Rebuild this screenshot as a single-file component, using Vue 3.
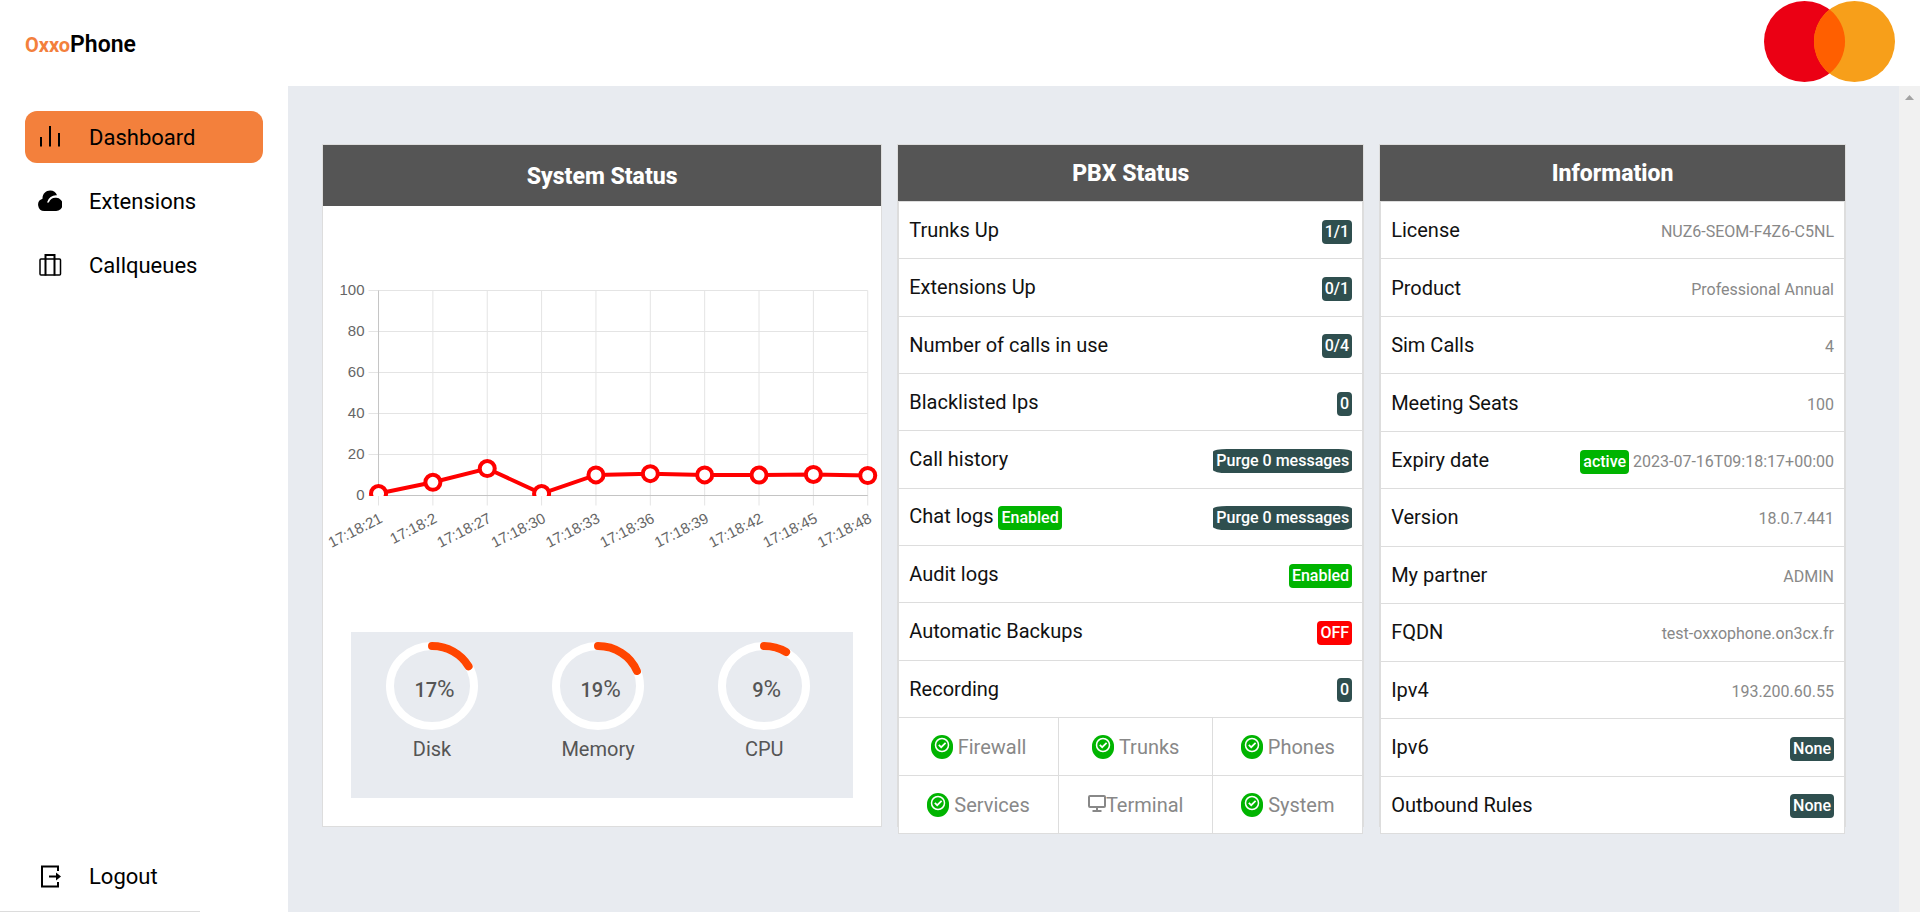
<script setup>
const nav = [
  { label: 'Dashboard', icon: 'bars', active: true },
  { label: 'Extensions', icon: 'cloud' },
  { label: 'Callqueues', icon: 'case' },
]

const samples = [
  { time: '17:18:21', value: 1 },
  { time: '17:18:2', value: 6.5 },
  { time: '17:18:27', value: 13.2 },
  { time: '17:18:30', value: 1 },
  { time: '17:18:33', value: 10.1 },
  { time: '17:18:36', value: 10.7 },
  { time: '17:18:39', value: 10.1 },
  { time: '17:18:42', value: 10 },
  { time: '17:18:45', value: 10.3 },
  { time: '17:18:48', value: 9.8 },
]
const left = 55.5
const right = 544.5
const top = 18.5
const bottom = 223.5
const xAt = (i) => left + ((right - left) * i) / (samples.length - 1)
const yAt = (v) => bottom - ((bottom - top) * v) / 100
const grid = [0, 20, 40, 60, 80, 100]
const line = samples.map((s, i) => `${xAt(i)},${yAt(s.value)}`).join(' ')

const gauges = [
  { label: 'Disk', value: 17 },
  { label: 'Memory', value: 19 },
  { label: 'CPU', value: 9 },
]

const pbx = [
  { label: 'Trunks Up', badge: '1/1', tone: 'slate' },
  { label: 'Extensions Up', badge: '0/1', tone: 'slate' },
  { label: 'Number of calls in use', badge: '0/4', tone: 'slate' },
  { label: 'Blacklisted Ips', badge: '0', tone: 'slate' },
  { label: 'Call history', action: 'Purge 0 messages' },
  { label: 'Chat logs', note: 'Enabled', action: 'Purge 0 messages' },
  { label: 'Audit logs', badge: 'Enabled', tone: 'green' },
  { label: 'Automatic Backups', badge: 'OFF', tone: 'red' },
  { label: 'Recording', badge: '0', tone: 'slate' },
]

const services = ['Firewall', 'Trunks', 'Phones', 'Services', 'Terminal', 'System']

const info = [
  { label: 'License', value: 'NUZ6-SEOM-F4Z6-C5NL' },
  { label: 'Product', value: 'Professional Annual' },
  { label: 'Sim Calls', value: '4' },
  { label: 'Meeting Seats', value: '100' },
  { label: 'Expiry date', value: '2023-07-16T09:18:17+00:00', badge: 'active', tone: 'green' },
  { label: 'Version', value: '18.0.7.441' },
  { label: 'My partner', value: 'ADMIN' },
  { label: 'FQDN', value: 'test-oxxophone.on3cx.fr' },
  { label: 'Ipv4', value: '193.200.60.55' },
  { label: 'Ipv6', badge: 'None', tone: 'slate' },
  { label: 'Outbound Rules', badge: 'None', tone: 'slate' },
]
</script>

<template>
  <div class="app">
    <header class="topbar">
      <a href="#" class="brand"><span class="brand-accent">Oxxo</span>Phone</a>
      <svg class="avatar" width="131" height="81" viewBox="0 0 131 81" role="img" aria-label="Profile">
        <circle cx="40.5" cy="40.5" r="40.5" fill="#eb0014" />
        <circle cx="90.5" cy="40.5" r="40.5" fill="#f79f1a" />
        <path d="M65.5 8.600A40.500 40.500 0 0 1 65.500 72.400A40.500 40.500 0 0 1 65.500 8.600Z" fill="#ff5f00" />
      </svg>
    </header>

    <div class="body">
      <aside class="sidebar">
        <nav class="menu">
          <a v-for="item in nav" :key="item.label" href="#" class="item" :class="{ active: item.active }">
            <svg v-if="item.icon === 'bars'" class="icon" viewBox="0 0 24 24" fill="none" stroke="#000">
              <path d="M3 12v9.500" stroke-width="2" />
              <path d="M12 1v20.500" stroke-width="2" />
              <path d="M21 8v13.500" stroke-width="2" />
            </svg>
            <svg v-else-if="item.icon === 'cloud'" class="icon" viewBox="0 0 24 24">
              <path fill="#000" d="M6.500 22A6.300 6.300 0 0 1 4.500 9.700C4.500 4.500 8 1.500 12.200 1.500C15.500 1.500 18 3.300 19 6.200A9.200 9.200 0 0 0 9 13.500L10.800 13.500A7.300 7.300 0 0 1 18.300 8.800A6.600 6.600 0 0 1 17.800 22Z" />
            </svg>
            <svg v-else class="icon" viewBox="0 0 24 24" fill="none" stroke="#000">
              <rect x="2" y="6" width="20.500" height="16" rx="1" stroke-width="1.500" />
              <path d="M7.500 22.500V2H16.500V22.500" stroke-width="2" />
            </svg>
            <span>{{ item.label }}</span>
          </a>
        </nav>
        <a href="#" class="item logout">
          <svg class="icon" viewBox="0 0 24 24" fill="none" stroke="#000" stroke-width="2">
            <path d="M20 7V2.500H4V22.500H20V18" />
            <path d="M11 12.500H19" />
            <path d="M18 8.500L23 12.500L18 16.500Z" fill="#000" stroke="none" />
          </svg>
          <span>Logout</span>
        </a>
      </aside>

      <main class="content">
        <div class="cards">
          <section class="card">
            <h2 class="title system-title">System Status</h2>
            <svg class="chart" viewBox="0 0 558 288" role="img" aria-label="System usage over time">
              <defs>
                <clipPath id="plot"><rect x="40" y="0" width="518" height="224" /></clipPath>
              </defs>
              <g class="grid-lines">
                <line v-for="(s, i) in samples" :key="'x' + s.time" :x1="xAt(i)" :x2="xAt(i)" :y1="top" :y2="bottom + 10" />
                <line v-for="g in grid" :key="'y' + g" :x1="left - 10" :x2="right" :y1="yAt(g)" :y2="yAt(g)" />
                <path :d="`M${left} ${top}V${bottom}H${right}`" class="axis" />
              </g>
              <g class="ticks">
                <text v-for="g in grid" :key="g" :x="left - 14" :y="yAt(g) + 4" text-anchor="end">{{ g }}</text>
                <text
                  v-for="(s, i) in samples"
                  :key="s.time"
                  :transform="`translate(${xAt(i) + 5} ${bottom + 26}) rotate(-27)`"
                  text-anchor="end"
                >{{ s.time }}</text>
              </g>
              <g clip-path="url(#plot)" class="series">
                <polyline :points="line" fill="none" />
                <circle v-for="(s, i) in samples" :key="s.time" :cx="xAt(i)" :cy="yAt(s.value)" r="7.5" />
              </g>
            </svg>
            <div class="gauges">
              <div v-for="g in gauges" :key="g.label" class="gauge">
                <div class="dial">
                  <svg width="92" height="88" viewBox="0 0 92 88" fill="none" stroke-width="8">
                    <ellipse cx="46" cy="44" rx="42" ry="40" stroke="#fff" />
                    <path
                      d="M46 4A42 40 0 0 1 46 84A42 40 0 0 1 46 4"
                      stroke="#ff4500"
                      stroke-linecap="round"
                      pathLength="100"
                      :stroke-dasharray="`${g.value} 100`"
                    />
                  </svg>
                  <div class="reading">{{ g.value }}<span class="percent">%</span></div>
                </div>
                <div class="gauge-label">{{ g.label }}</div>
              </div>
            </div>
          </section>

          <section class="card">
            <div class="sheet">
              <table class="rows pbx">
                <thead>
                  <tr><th colspan="2" class="title">PBX Status</th></tr>
                </thead>
                <tbody>
                  <tr v-for="r in pbx" :key="r.label">
                    <th scope="row">{{ r.label }} <span v-if="r.note" class="badge green">{{ r.note }}</span></th>
                    <td>
                      <button v-if="r.action" type="button" class="badge slate">{{ r.action }}</button>
                      <span v-else class="badge" :class="r.tone">{{ r.badge }}</span>
                    </td>
                  </tr>
                </tbody>
              </table>
              <ul class="services">
                <li v-for="s in services" :key="s">
                  <svg v-if="s === 'Terminal'" class="desktop" width="18" height="18" viewBox="0 0 18 18" fill="none" stroke="#888" stroke-width="2">
                    <rect x="1" y="2" width="16" height="11" rx="1" />
                    <path d="M9 13V16.500M4.500 17H13.500" />
                  </svg>
                  <span v-else class="check">
                    <svg width="16" height="16" viewBox="0 0 16 16" fill="none" stroke="#fff">
                      <circle cx="8" cy="8" r="6.500" stroke-width="1.500" />
                      <path d="M4.800 7.800L7.200 10.200L11.600 5.800" stroke-width="1.700" />
                    </svg>
                  </span>
                  <span>{{ s }}</span>
                </li>
              </ul>
            </div>
          </section>

          <section class="card">
            <div class="sheet">
              <table class="rows info">
                <thead>
                  <tr><th colspan="2" class="title">Information</th></tr>
                </thead>
                <tbody>
                  <tr v-for="r in info" :key="r.label">
                    <th scope="row">{{ r.label }}</th>
                    <td><span v-if="r.badge" class="badge" :class="r.tone">{{ r.badge }}</span> {{ r.value }}</td>
                  </tr>
                </tbody>
              </table>
            </div>
          </section>
        </div>
      </main>

      <div class="scrollbar" aria-hidden="true">
        <svg width="9" height="5" viewBox="0 0 9 5"><path d="M4.500 0L9 5H0Z" fill="#a3a3a3" /></svg>
      </div>
    </div>
  </div>
</template>

<style>
body {
  background: #fff;
}
</style>

<style scoped>
.app {
  display: flex;
  flex-direction: column;
  min-height: 100vh;
  font-family: Roboto, "Liberation Sans", sans-serif;
  color: #000;
}
.app * {
  box-sizing: border-box;
}
.topbar {
  display: flex;
  justify-content: space-between;
  align-items: flex-start;
  height: 86px;
  padding: 1px 25px 0;
}
.brand {
  display: flex;
  align-items: baseline;
  padding-top: 30px;
  font-size: 23px;
  line-height: 28px;
  font-weight: 600;
  color: #000;
  text-decoration: none;
}
.brand-accent {
  font-size: 20px;
  font-weight: 700;
  color: #f3803c;
}
.body {
  display: flex;
  flex: 1;
}
.sidebar {
  position: relative;
  display: flex;
  flex-direction: column;
  justify-content: space-between;
  width: 288px;
  padding: 25px 25px 10px;
}
.sidebar::after {
  content: "";
  position: absolute;
  left: 0;
  bottom: 0;
  width: 200px;
  height: 1px;
  background: #dcdcdc;
}
.menu {
  display: flex;
  flex-direction: column;
  gap: 12px;
}
.item {
  display: flex;
  align-items: center;
  gap: 27px;
  width: 238px;
  height: 52px;
  padding-left: 13px;
  border-radius: 12px;
  font-size: 22px;
  color: #000;
  text-decoration: none;
}
.item.active {
  background: #f3803c;
}
.icon {
  width: 24px;
  height: 24px;
}
.content {
  flex: 1;
  min-width: 0;
  padding: 58px 53px 78px 34px;
  background: #e8ebf0;
}
.cards {
  display: grid;
  grid-template-columns: 6fr 5fr 5fr;
  gap: 15px;
}
.card {
  border: 1px solid #ddd;
  background: #fff;
}
.title {
  margin: 0;
  background: #555;
  color: #fff;
  font-size: 23px;
  font-weight: 800;
  text-align: center;
}
.system-title {
  padding-top: 2px;
  line-height: 59px;
}
.chart {
  display: block;
  width: 100%;
  margin-top: 66px;
  margin-bottom: 72px;
}
.grid-lines line {
  stroke: #e4e4e4;
}
.axis {
  fill: none;
  stroke: #c4c4c4;
}
.ticks {
  font-family: "Liberation Sans", Arial, sans-serif;
  font-size: 15px;
  fill: #666;
}
.series {
  fill: #fff;
  stroke: #f00;
  stroke-width: 4px;
}
.gauges {
  display: grid;
  grid-template-columns: repeat(3, 1fr);
  gap: 4px;
  margin: 0 28px;
  padding: 10px 8px 37px 0;
  background: #e8ebf0;
  color: #555;
}
.gauge {
  display: flex;
  flex-direction: column;
  align-items: center;
}
.dial {
  display: grid;
}
.dial > * {
  grid-area: 1 / 1;
}
.reading {
  align-self: center;
  padding: 6px 0 0 5px;
  font-size: 20px;
  line-height: 28px;
  font-weight: 500;
  text-align: center;
}
.percent {
  font-size: 24px;
  font-weight: 400;
}
.gauge-label {
  font-size: 20px;
  line-height: 24px;
  padding-top: 7px;
}
.sheet {
  margin-bottom: -8px;
}
.rows {
  width: 100%;
  border-collapse: separate;
  border-spacing: 0;
  background: #fff;
}
.pbx {
  height: 573px;
}
.info {
  height: 689px;
}
.rows thead th {
  height: 57px;
  padding: 0;
  border-bottom: 1px solid #ddd;
}
.rows tbody th,
.rows tbody td {
  height: 57px;
  padding: 0 10px;
  border: 0 solid #ddd;
  border-bottom-width: 1px;
  white-space: nowrap;
}
.rows tbody th {
  border-left-width: 1px;
  font-size: 20px;
  font-weight: 400;
  text-align: left;
  color: #111;
}
.rows tbody td {
  border-right-width: 1px;
  padding-top: 3px;
  font-size: 16px;
  text-align: right;
  color: #888;
}
.badge {
  display: inline-block;
  padding: 0 3px;
  border: 0;
  border-radius: 4px;
  font-family: inherit;
  font-size: 16px;
  line-height: 24px;
  font-weight: 500;
  color: #fff;
}
button.badge {
  border-radius: 10% / 12%;
}
.slate {
  background: #2f4f4f;
}
.green {
  background: #00b400;
}
.red {
  background: #f00;
}
.services {
  display: grid;
  grid-template-columns: 32fr 31fr 30fr;
  margin: 0;
  padding: 0;
  list-style: none;
  background: #fff;
  border-left: 1px solid #ddd;
}
.services li {
  display: flex;
  align-items: center;
  justify-content: center;
  height: 58px;
  border: 0 solid #ddd;
  border-width: 0 1px 1px 0;
  font-size: 20px;
  color: #888;
}
.check {
  display: flex;
  justify-content: center;
  width: 22px;
  height: 24px;
  margin-right: 5px;
  padding-top: 2px;
  border-radius: 11px;
  background: #00b400;
}
.desktop {
  margin-bottom: 4px;
}
.scrollbar {
  display: flex;
  justify-content: center;
  width: 21px;
  padding-top: 9px;
  background: #f1f1f1;
}
</style>
